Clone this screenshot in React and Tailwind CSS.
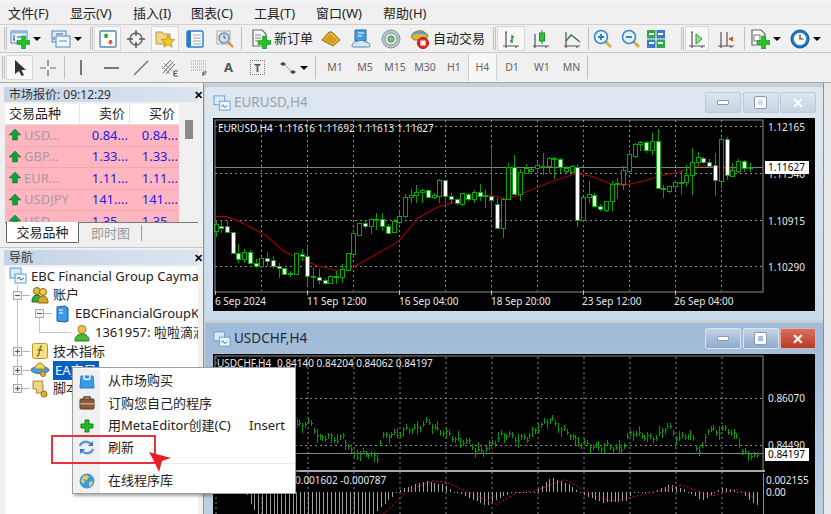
import React from "react";

// candle data read off the chart: [x, wickTop, bodyTop, bodyBottom, wickBottom, whiteBody]
const left = [
  [32,405,415,437,452,0],[49,405,420,428,440,1],[66,405,422,440,440,1],[83,438,440,502,505,1],[100,475,502,520,530,1],
  [117,490,498,520,532,0],[134,492,498,532,535,1],[152,520,532,540,545,1],[169,515,518,540,545,0],[186,498,518,525,540,1],
  [204,510,523,542,550,1],[221,530,540,548,575,1],[238,545,548,565,568,1],[255,555,561,565,572,1],[273,500,503,565,568,0],
  [290,490,505,510,525,1],[307,487,510,570,600,1],[324,545,570,575,605,1],[342,548,573,582,595,1],[359,575,583,592,597,1],
  [376,568,570,593,595,0],[393,555,570,572,595,0],[411,535,550,575,590,0],[428,500,503,552,555,0],[445,435,442,505,515,0],
  [462,410,412,447,450,0],[480,405,412,420,430,1],[497,395,400,420,445,0],[514,380,400,402,432,0],[531,380,400,420,435,1],
  [548,415,420,442,445,1],[566,400,405,438,442,0],[583,375,390,410,415,0],[600,325,333,392,395,0],[617,310,328,334,350,0],
  [634,298,318,328,350,0],[651,310,312,318,350,0],[669,312,312,334,335,1],[686,320,328,334,340,0],[703,280,283,330,350,0],
  [720,282,284,330,350,1],[738,320,330,340,355,1],[755,335,340,352,360,1],[772,320,323,355,360,0],[789,320,325,340,345,1],
  [806,312,320,340,350,0],[824,295,320,332,345,1],[841,310,328,331,365,0],[858,182,330,343,390,1],[876,335,355,428,430,1],
  [893,335,340,428,455,0],[910,230,243,340,342,0],[927,208,243,325,328,1],[945,250,260,325,345,0],
];
const right = [
  [17,235,248,262,265,0],[34,247,250,255,258,0],[51,225,238,248,262,0],[69,200,240,242,268,0],[86,212,217,240,262,0],
  [103,212,216,219,278,1],[120,215,219,243,260,1],[137,240,248,255,262,0],[155,238,241,258,262,0],[172,235,243,402,422,1],
  [189,332,334,402,405,0],[206,285,326,334,350,0],[223,322,327,360,365,1],[240,355,362,370,375,1],[258,345,347,372,378,0],
  [275,285,294,347,375,0],[292,275,292,296,338,0],[309,240,254,295,312,0],[327,195,205,255,262,0],[344,172,176,212,215,0],
  [361,165,170,175,195,0],[378,165,170,193,200,1],[395,140,165,193,208,0],[413,128,166,308,310,1],[430,298,307,310,337,0],
  [447,300,302,315,320,0],[464,282,290,302,312,0],[482,255,288,290,327,0],[499,238,268,290,300,0],[516,185,228,268,327,0],
  [533,197,213,230,240,0],[550,212,216,230,235,1],[568,218,228,240,245,1],[585,200,238,284,330,1],[603,155,160,285,305,0],
  [620,152,160,268,282,1],[637,232,252,270,272,0],[654,220,226,256,260,0],[671,222,226,246,258,1],[689,230,243,245,258,0],
];
const candles = [
  ...left.map(([x, a, b, c, d, w]) => [205 + x / 3, 85 + a / 3, 85 + b / 3, 85 + c / 3, 85 + d / 3, w]),
  ...right.map(([x, a, b, c, d, w]) => [520 + x / 3, 85 + a / 3, 85 + b / 3, 85 + c / 3, 85 + d / 3, w]),
];
const maLine = [
  ...[[32,392],[65,392],[100,405],[140,425],[185,450],[235,495],[290,520],[340,540],[400,555],[430,552],[500,512],[580,467],[640,395],[700,362],[760,345],[820,328],[870,330],[900,338],[945,328]].map(([x, y]) => [205 + x / 3, 85 + y / 3]),
  ...[[0,325],[100,285],[170,262],[220,272],[270,293],[310,298],[370,285],[420,270],[470,260],[530,240],[570,240],[620,250],[690,245]].map(([x, y]) => [520 + x / 3, 85 + y / 3]),
];

const z2 = ([x, y]) => [295 + x / 2.925, 320 + y / 3];
const pricePath = [[-235,300],[-150,310],[-60,320],[10,310],[50,310],[70,352],[140,350],[165,395],[240,405],[250,352],[300,335],[340,325],[390,305],[440,340],[500,365],[550,395],[600,342],[680,355],[700,325],[750,295],[790,335],[850,375],[900,378],[960,380],[985,330],[1040,355],[1090,318],[1120,350],[1160,345],[1185,395],[1205,330],[1250,325],[1295,345],[1310,400],[1350,405]].map(z2);
const histPath = [[-235,495],[-150,495],[-135,540],[-100,600],[200,600],[240,570],[300,512],[310,505],[380,480],[430,490],[470,512],[560,555],[600,530],[640,512],[700,512],[750,470],[800,490],[850,525],[900,545],[970,540],[990,512],[1050,510],[1100,490],[1140,505],[1190,540],[1250,500],[1300,510],[1345,553]].map(z2);
const signalPath = [[-100,640],[260,578],[330,510],[400,480],[440,482],[500,510],[590,550],[650,515],[700,510],[790,475],[850,510],[920,540],[1000,525],[1130,492],[1220,525],[1290,505],[1345,530]].map(z2);

function valueAt(pts, x) {
  for (let i = 1; i < pts.length; i++) {
    if (x <= pts[i][0]) {
      const t = (x - pts[i - 1][0]) / (pts[i][0] - pts[i - 1][0]);
      return pts[i - 1][1] + (pts[i][1] - pts[i - 1][1]) * t;
    }
  }
  return pts[pts.length - 1][1];
}

const toPoints = (pts) => pts.map((p) => p.join(",")).join(" ");
const range = (from, to, step) => {
  const out = [];
  for (let v = from; v <= to; v += step) out.push(v);
  return out;
};

function EurChart() {
  return (
    <svg width="602" height="193" viewBox="213 117 602 193" className="block bg-black">
      {[261, 307, 353, 399, 445, 491, 537, 583, 629, 675, 721].map((x) => (
        <line key={x} x1={x + 0.5} x2={x + 0.5} y1="119" y2="290" stroke="#8c8c8c" strokeDasharray="2 3" />
      ))}
      {[125.5, 172.5, 219.5, 265.5].map((y) => (
        <line key={y} x1="215" x2="763" y1={y} y2={y} stroke="#8c8c8c" strokeDasharray="2 3" />
      ))}
      <line x1="215" x2="763" y1="166.5" y2="166.5" stroke="#808080" />
      <polyline points={toPoints(maLine)} fill="none" stroke="#a80000" strokeWidth="1.1" />
      {candles.map(([x, a, b, c, d, w], i) => {
        const cx = Math.round(x) + 0.5;
        return (
          <g key={i} shapeRendering="crispEdges">
            <line x1={cx} x2={cx} y1={a} y2={d} stroke="#00a000" />
            <rect x={cx - 2} y={b} width="4" height={Math.max(c - b, 1)} fill={w ? "#fff" : "#000"} stroke="#00a800" />
          </g>
        );
      })}
      <rect x="215" y="119" width="548" height="172" fill="none" stroke="#909090" />
      {[215, 307, 399, 491, 583, 675].map((x) => (
        <line key={x} x1={x + 0.5} x2={x + 0.5} y1="290" y2="294" stroke="#c0c0c0" />
      ))}
      <g fill="#e8e8e8" fontSize="10">
        <text x="218" y="131">EURUSD,H4</text>
        <text x="278" y="131">1.11616 1.11692 1.11613 1.11627</text>
        <text x="768" y="130">1.12165</text>
        <text x="768" y="177">1.11340</text>
        <text x="768" y="224">1.10915</text>
        <text x="768" y="270">1.10290</text>
        <text x="215" y="304">6 Sep 2024</text>
        <text x="307" y="304">11 Sep 12:00</text>
        <text x="399" y="304">16 Sep 04:00</text>
        <text x="491" y="304">18 Sep 20:00</text>
        <text x="582" y="304">23 Sep 12:00</text>
        <text x="674" y="304">26 Sep 04:00</text>
      </g>
      <rect x="765" y="160" width="44" height="13" fill="#fff" />
      <text x="768" y="170" fill="#000" fontSize="10">1.11627</text>
    </svg>
  );
}

function ChfChart() {
  const step = 46 / 12;
  const bars = range(216, 757, step);
  const priceBars = range(216, 757, 46 / 16);
  return (
    <svg width="602" height="161" viewBox="213 353 602 161" className="block bg-black">
      {range(215.5, 730, 46).map((x) => (
        <line key={x} x1={x + 0.5} x2={x + 0.5} y1="356" y2="514" stroke="#8c8c8c" strokeDasharray="2 3" />
      ))}
      {[397.5, 444.5].map((y) => (
        <line key={y} x1="215" x2="763" y1={y} y2={y} stroke="#8c8c8c" strokeDasharray="2 3" />
      ))}
      <line x1="215" x2="763" y1="452.5" y2="452.5" stroke="#7f8790" />
      {priceBars.map((x, i) => {
        const y = valueAt(pricePath, x);
        const noise = Math.sin(i * 1.7) * 2.5 + Math.cos(i * 0.9) * 1.5;
        const cx = Math.round(x) + 0.5;
        return (
          <g key={i} shapeRendering="crispEdges">
            <line x1={cx} x2={cx} y1={y + noise - 3 - (i % 7 === 0 ? 4 : 0)} y2={y + noise + 3 + (i % 5 === 0 ? 4 : 0)} stroke="#009a00" />
            <line x1={cx - 1} x2={cx + 1} y1={y + noise} y2={y + noise} stroke="#009a00" />
          </g>
        );
      })}
      <rect x="215" y="355" width="548" height="115" fill="none" stroke="#909090" />
      <rect x="213" y="469" width="552" height="2" fill="#a8a8a8" />
      {bars.map((x, i) => {
        const y = valueAt(histPath, x);
        const cx = Math.round(x) + 0.5;
        return <line key={i} x1={cx} x2={cx} y1="490.5" y2={Math.abs(y - 490.5) < 1 ? 492 : y} stroke="#a0a0a0" shapeRendering="crispEdges" />;
      })}
      <polyline points={toPoints(signalPath)} fill="none" stroke="#d01010" strokeDasharray="2 2" />
      <line x1="763.5" x2="763.5" y1="472" y2="514" stroke="#909090" />
      <g fill="#e8e8e8" fontSize="10">
        <text x="217" y="366">USDCHF,H4</text>
        <text x="277" y="366">0.84140 0.84204 0.84062 0.84197</text>
        <text x="295" y="483">0.001602 -0.000787</text>
        <text x="768" y="401">0.86070</text>
        <text x="768" y="448">0.84490</text>
        <text x="766" y="483">0.002155</text>
        <text x="766" y="495">0.00</text>
      </g>
      <rect x="765" y="447" width="44" height="13" fill="#fff" />
      <text x="768" y="457" fill="#000" fontSize="10">0.84197</text>
    </svg>
  );
}

/* toolbar icons */
const Svg = ({ children, size = 20 }) => (
  <svg width={size} height={size} viewBox="0 0 20 20" className="block shrink-0">
    {children}
  </svg>
);
const Plus = ({ x = 9, y = 9, s = 10 }) => (
  <path
    d={`M${x + s * 0.35} ${y}h${s * 0.3}v${s * 0.35}h${s * 0.35}v${s * 0.3}h${-s * 0.35}v${s * 0.35}h${-s * 0.3}v${-s * 0.35}h${-s * 0.35}v${-s * 0.3}h${s * 0.35}z`}
    fill="#22c42a"
    stroke="#0c8c14"
    strokeWidth="0.6"
  />
);
const IconNewChart = () => (
  <Svg>
    <rect x="1" y="2" width="16" height="12" fill="#eaf3fb" stroke="#4a8ac8" />
    <rect x="1" y="2" width="16" height="2.500" fill="#8ab8e0" />
    <path d="M4 6v5M3 11h2M7 8h4" stroke="#335" fill="none" strokeWidth="0.9" />
    <Plus x={7} y={7} s={13} />
  </Svg>
);
const IconProfile = () => (
  <Svg>
    <rect x="1" y="2" width="14" height="11" fill="#dcebf8" stroke="#4a8ac8" />
    <rect x="5" y="7" width="14" height="11" fill="#f0f6fc" stroke="#4a8ac8" />
    <path d="M3 8v3M5 5h7" stroke="#456" fill="none" strokeWidth="0.9" />
    <path d="M8 12h8" stroke="#6a8aa8" fill="none" />
  </Svg>
);
const IconMarket = () => (
  <Svg>
    <rect x="2" y="2" width="16" height="16" rx="1" fill="#fff" stroke="#4a8ac8" strokeWidth="1.4" />
    <path d="M8 4l3 3H9.500v2h-3V7H5z" fill="#2aa83a" />
    <path d="M12.500 16l-3-3h1.500v-2h3v2H15z" fill="#e8602a" />
  </Svg>
);
const IconCross = () => (
  <Svg>
    <circle cx="10" cy="10" r="6" fill="none" stroke="#666" strokeWidth="1.5" />
    <path d="M10 1v6M10 13v6M1 10h6M13 10h6" stroke="#555" strokeWidth="1.5" />
  </Svg>
);
const IconFav = () => (
  <Svg>
    <path d="M1 3h6l2 2h6v10H1z" fill="#f0d68a" stroke="#b89a4a" />
    <path d="M13 6l2 4.200 4.600.500-3.400 3 1 4.500-4.200-2.400-4.200 2.400 1-4.500-3.400-3 4.600-.500z" fill="#f4c81e" stroke="#a88410" strokeWidth="0.7" />
  </Svg>
);
const IconBook = () => (
  <Svg>
    <rect x="2" y="2" width="16" height="16" rx="1.500" fill="#fff" stroke="#2a7ac8" strokeWidth="1.4" />
    <rect x="2" y="2" width="4" height="16" fill="#2a7ac8" />
    <path d="M8 6h8M8 9h8M8 12h8M8 15h8" stroke="#8aa" />
  </Svg>
);
const IconTester = () => (
  <Svg>
    <rect x="2" y="2" width="13" height="13" fill="#eee" stroke="#aaa" />
    <circle cx="9" cy="9" r="5" fill="#cfe3f5" stroke="#6a8aa8" strokeWidth="1.300" />
    <path d="M9 6v3h2" stroke="#456" fill="none" />
    <path d="M13 13l5 5" stroke="#c8982a" strokeWidth="2.200" />
  </Svg>
);
const IconNewOrder = () => (
  <Svg>
    <path d="M2 1h9l4 4v12H2z" fill="#fff" stroke="#666" strokeWidth="1.200" />
    <path d="M4 6h6M4 9h6M4 12h3" stroke="#777" />
    <Plus x={7} y={7} s={13} />
  </Svg>
);
const IconTag = () => (
  <Svg>
    <path d="M1 11l7-8h3l8 8-7 6z" fill="#e8b830" stroke="#8a6414" />
    <path d="M3 11l6-6 7 6-4 4z" fill="#d89c20" />
  </Svg>
);
const IconSignals = () => (
  <Svg>
    <path d="M4 1h11v11H4z" fill="#4a9ae0" stroke="#2a6ab0" />
    <path d="M7 4h6M7 7h4" stroke="#fff" />
    <path d="M1 17c0-3 3-5 5-4 1-2 7-2 8 0 3 0 5 1 5 4 0 1-1 1-2 1H3c-1 0-2 0-2-1z" fill="#d8e8f5" stroke="#5a8ab8" />
  </Svg>
);
const IconRadar = () => (
  <Svg>
    <circle cx="10" cy="10" r="9" fill="#b8c4c8" stroke="#8a9aa0" />
    <circle cx="10" cy="10" r="6" fill="#dfe6e8" stroke="#8a9aa0" />
    <circle cx="10" cy="10" r="3" fill="#7ac08a" stroke="#4a8a5a" />
  </Svg>
);
const IconAuto = () => (
  <Svg>
    <path d="M1 8c1-5 7-7 12-6l5 4-2 5H4z" fill="#e2b23a" stroke="#98781a" />
    <path d="M3 5c4-2 9-2 13 0" stroke="#4a9ae0" strokeWidth="2.400" fill="none" />
    <circle cx="13" cy="14" r="5.500" fill="#e03020" stroke="#a01810" />
    <rect x="10.500" y="11.500" width="5" height="5" fill="#fff" />
  </Svg>
);
const IconBars = () => (
  <Svg>
    <path d="M2 17h16M5 3v14M4 3h2M15 17v2M5 17v2" stroke="#555" fill="none" strokeWidth="1.200" />
    <path d="M11 6v8M9 12h2M11 8h2" stroke="#18a028" strokeWidth="1.500" fill="none" />
  </Svg>
);
const IconCandle = () => (
  <Svg>
    <path d="M2 17h16M4 5v12M15 17v2M4 17v2" stroke="#555" fill="none" strokeWidth="1.200" />
    <path d="M11 1v14" stroke="#189028" />
    <rect x="8.500" y="4" width="5" height="8" fill="#2cc040" stroke="#189028" />
  </Svg>
);
const IconLine = () => (
  <Svg>
    <path d="M2 17h16M4 3v14M15 17v2M4 17v2" stroke="#555" fill="none" strokeWidth="1.200" />
    <path d="M4 12l5-6 4 3 5 4" stroke="#2a7a3a" fill="none" strokeWidth="1.300" />
  </Svg>
);
const IconZoom = ({ minus }) => (
  <Svg>
    <path d="M12 12l6 6" stroke="#d8b040" strokeWidth="3" />
    <circle cx="8" cy="8" r="6.500" fill="#e4f2fc" stroke="#3a8ac8" strokeWidth="1.600" />
    <path d={minus ? "M5 8h6" : "M5 8h6M8 5v6"} stroke="#2a7ab8" strokeWidth="1.800" />
  </Svg>
);
const IconTile = () => (
  <Svg>
    <rect x="1" y="1" width="8.500" height="8.500" fill="#2ea84a" />
    <rect x="10.500" y="1" width="8.500" height="8.500" fill="#3a7ad0" />
    <rect x="1" y="10.500" width="8.500" height="8.500" fill="#3a7ad0" />
    <rect x="10.500" y="10.500" width="8.500" height="8.500" fill="#2ea84a" />
    <path d="M3 5h5M12 5h5M3 14h5M12 14h5" stroke="#fff" strokeWidth="2" />
  </Svg>
);
const IconShift = () => (
  <Svg>
    <path d="M2 17h16M5 3v14M4 3h2M15 17v2M5 17v2" stroke="#555" fill="none" strokeWidth="1.200" />
    <path d="M9 5l6 5-6 5z" fill="#9ce29c" stroke="#18a028" />
  </Svg>
);
const IconAutoScroll = () => (
  <Svg>
    <path d="M2 17h16M5 3v14M11 3v14M15 17v2M5 17v2" stroke="#555" fill="none" strokeWidth="1.200" />
    <path d="M13 10l4-2-1 2 1 2z" fill="#e04020" stroke="#e04020" />
  </Svg>
);
const IconTemplate = () => (
  <Svg>
    <path d="M2 1h9l4 4v11H2z" fill="#fff" stroke="#666" strokeWidth="1.200" />
    <rect x="4" y="6" width="6" height="6" fill="none" stroke="#777" />
    <Plus x={7} y={7} s={13} />
  </Svg>
);
const IconClock = () => (
  <Svg>
    <circle cx="10" cy="10" r="9" fill="#1e78c8" stroke="#14508c" />
    <circle cx="10" cy="10" r="6.200" fill="#fff" />
    <path d="M10 5.500V10h3.500" stroke="#333" fill="none" strokeWidth="1.200" />
  </Svg>
);

const Grip = () => <div className="w-[3px] h-[23px] mx-[1px] shrink-0 border-x border-[#c4c4c4] bg-[#e6e6e6]" />;
const Sep = () => <div className="w-px h-[23px] mx-[1px] shrink-0 bg-[#c0c0c0]" />;
const Caret = () => <div className="w-0 h-0 shrink-0 border-x-[4px] border-x-transparent border-t-[4px] border-t-black" />;

function Tool({ w = 30, pressed, children }) {
  return (
    <div
      className={`h-[25px] shrink-0 flex items-center justify-center gap-[3px] ${
        pressed ? "bg-[#f8f8f8] border border-[#d8d8d8]" : ""
      }`}
      style={{ width: w }}
    >
      {children}
    </div>
  );
}

function TopToolbar() {
  return (
    <div className="h-[28px] flex items-center pl-[3px] border-b border-[#c8c8c8]">
      <Grip />
      <Tool w={35}><IconNewChart /><Caret /></Tool>
      <Tool w={46}><IconProfile /><Caret /></Tool>
      <Grip />
      <Tool w={27} pressed><IconMarket /></Tool>
      <Tool w={30}><IconCross /></Tool>
      <Tool w={28} pressed><IconFav /></Tool>
      <Tool w={31}><IconBook /></Tool>
      <Tool w={30}><IconTester /></Tool>
      <Sep />
      <div className="w-[65px] h-[25px] ml-[8px] shrink-0 flex items-center gap-[3px]">
        <IconNewOrder />
        <span className="text-[13px] text-[#222]">新订单</span>
      </div>
      <Tool w={30}><IconTag /></Tool>
      <Tool w={30}><IconSignals /></Tool>
      <Tool w={30}><IconRadar /></Tool>
      <div className="w-[86px] h-[25px] shrink-0 flex items-center gap-[3px] pl-[4px]">
        <IconAuto />
        <span className="text-[13px] text-[#222]">自动交易</span>
      </div>
      <Grip />
      <Tool w={28} pressed><IconBars /></Tool>
      <Tool w={32}><IconCandle /></Tool>
      <Tool w={30}><IconLine /></Tool>
      <Sep />
      <Tool w={26}><IconZoom /></Tool>
      <Tool w={30}><IconZoom minus /></Tool>
      <Tool w={20}><IconTile /></Tool>
      <div className="w-[14px] shrink-0" />
      <Grip />
      <Tool w={24} pressed><IconShift /></Tool>
      <Tool w={34}><IconAutoScroll /></Tool>
      <Sep />
      <Tool w={38}><IconTemplate /><Caret /></Tool>
      <Tool w={42}><IconClock /><Caret /></Tool>
    </div>
  );
}

function DrawToolbar() {
  const frames = [
    ["M1", 30],
    ["M5", 30],
    ["M15", 30],
    ["M30", 30],
    ["H1", 28],
    ["H4", 29],
    ["D1", 30],
    ["W1", 30],
    ["MN", 29],
  ];
  return (
    <div className="h-[29px] flex items-center pl-[1px] bg-[#f0f0f0]">
      <Grip />
      <Tool w={27} pressed>
        <svg width="14" height="18" viewBox="0 0 14 18"><path d="M2 1v14l4-3 2.500 5 2.500-1-2.500-5H13z" fill="#333" /></svg>
      </Tool>
      <Tool w={30}>
        <svg width="18" height="18" viewBox="0 0 18 18"><path d="M9 1v6M9 11v6M1 9h6M11 9h6" stroke="#666" strokeWidth="1.200" /></svg>
      </Tool>
      <Sep />
      <Tool w={30}><div className="w-[2px] h-[15px] bg-[#777]" /></Tool>
      <Tool w={30}><div className="w-[15px] h-[2px] bg-[#777]" /></Tool>
      <Tool w={29}>
        <svg width="16" height="16" viewBox="0 0 16 16"><path d="M1 15L15 1" stroke="#777" strokeWidth="1.400" /></svg>
      </Tool>
      <Tool w={29}>
        <svg width="18" height="18" viewBox="0 0 18 18">
          <path d="M1 10L10 1M2 14L12 3M5 15L14 5" stroke="#666" />
          <path d="M3 4l8 8M1 7l8 8" stroke="#999" />
          <path d="M13 12h4M13 14.500h3M13 17h4M13 12v5" stroke="#555" strokeWidth="1.200" />
        </svg>
      </Tool>
      <Tool w={30}>
        <svg width="18" height="18" viewBox="0 0 18 18">
          <path d="M1 2h15M1 5h15M1 8h15M1 11h15" stroke="#999" strokeDasharray="1 1" />
          <path d="M13 13h4M13 15h3M13 13v4" stroke="#555" strokeWidth="1.200" />
        </svg>
      </Tool>
      <Tool w={29}><span className="text-[13px] font-bold text-[#555] leading-none">A</span></Tool>
      <Tool w={29}>
        <div className="w-[15px] h-[15px] border border-dotted border-[#777] flex items-center justify-center text-[11px] font-bold text-[#555] leading-none">T</div>
      </Tool>
      <Tool w={42}>
        <svg width="18" height="14" viewBox="0 0 18 14">
          <path d="M1 3l3-2 3 2-3 2zM11 11l3-2 3 2-3 2z" fill="#444" />
          <path d="M6 4l6 6" stroke="#666" strokeDasharray="1.500 1" />
        </svg>
        <Caret />
      </Tool>
      <Sep />
      <div className="w-[3px] shrink-0" />
      {frames.map(([f, w]) => (
        <div
          key={f}
          className={`h-[27px] shrink-0 flex items-center justify-center text-[10.5px] text-[#666] ${
            f === "H4" ? "bg-[#f8f8f8] border-x border-[#cfcfcf]" : ""
          }`}
          style={{ width: w }}
        >
          {f}
        </div>
      ))}
      <Sep />
    </div>
  );
}

function PanelHeader({ title }) {
  return (
    <div className="h-[15px] mx-[4px] flex items-center justify-between bg-gradient-to-r from-[#c4d4e6] to-[#dbe5f0] text-[12px] leading-none text-[#333] pl-[5px]">
      <span>{title}</span>
      <span className="w-[14px] text-[11px] font-bold text-black translate-x-[9px]">✕</span>
    </div>
  );
}

function MarketWatch() {
  const rows = [
    ["USD...", "0.84...", "0.84..."],
    ["GBP...", "1.33...", "1.33..."],
    ["EUR...", "1.11...", "1.11..."],
    ["USDJPY", "141....", "141...."],
    ["USD...", "1.35...", "1.35..."],
  ];
  return (
    <div className="h-[165px] pt-[4px] border-b border-[#c8c8c8]">
      <PanelHeader title="市场报价: 09:12:29" />
      <div className="mt-[2px] mx-[5px] h-[118px] overflow-hidden flex bg-[#f0f0f0]">
        <div className="w-[174px] shrink-0">
          <div className="h-[21px] grid grid-cols-[74px_50px_50px] bg-white text-[13px] text-[#222] items-center border-b border-[#e0e0e0]">
            <span className="pl-[4px]">交易品种</span>
            <span className="text-right pr-[4px] border-l border-[#e4e4e4]">卖价</span>
            <span className="text-right pr-[4px] border-l border-[#e4e4e4]">买价</span>
          </div>
          {rows.map((r, i) => (
            <div key={i} className="h-[21.5px] grid grid-cols-[74px_50px_50px] bg-[#ffb6c1] items-center border-b border-[#f0a8b4] text-[13px] leading-none">
              <span className="flex items-center gap-[3px] pl-[4px] text-[#a89aa0]">
                <svg width="12" height="12" viewBox="0 0 12 12" className="shrink-0"><path d="M6 0l6 6H8.500v5h-5V6H0z" fill="#12a03a" stroke="#0a6a24" strokeWidth="0.5" /></svg>
                {r[0]}
              </span>
              <span className="text-right pr-[1px] text-[#2020e8]">{r[1]}</span>
              <span className="text-right pr-[1px] text-[#2020e8]">{r[2]}</span>
            </div>
          ))}
        </div>
        <div className="flex-1 pl-[6px] pt-[16px]">
          <div className="w-[8px] h-[19px] bg-[#8a8a8a]" />
        </div>
      </div>
      <div className="mx-[5px] h-[21px] flex items-center border-t border-[#777] relative">
        <div className="ml-[1px] w-[73px] h-[21px] -mt-px bg-white border-x border-b border-[#666] rounded-b-[2px] text-[13px] text-[#222] text-center leading-[20px]">交易品种</div>
        <div className="ml-[12px] w-[50px] text-[13px] text-[#999] leading-[20px]">即时图</div>
        <div className="w-px h-[16px] bg-[#999]" />
      </div>
    </div>
  );
}

function TreeBox({ open }) {
  return (
    <div className="w-[9px] h-[9px] shrink-0 border border-[#a8a8a8] bg-[#f4f4f4] flex items-center justify-center relative">
      <div className="w-[5px] h-px bg-[#557]" />
      {!open && <div className="absolute w-px h-[5px] bg-[#557]" />}
    </div>
  );
}

function TreeRow({ indent = 0, box, open, icon, children, selected }) {
  return (
    <div className="h-[18.750px] flex items-center whitespace-nowrap" style={{ paddingLeft: indent }}>
      {box ? <TreeBox open={open} /> : null}
      {box ? <div className="w-[8px] h-px bg-[#b4b4b4] shrink-0" /> : null}
      <div className="w-[20px] shrink-0 flex justify-center">{icon}</div>
      <span
        className={`ml-[3px] text-[13px] ${selected ? "bg-[#0a5fc4] text-white w-[46px] h-[19px] leading-[19px] px-[2px] -ml-[1px]" : "text-[#222]"}`}
      >
        {children}
      </span>
    </div>
  );
}

const NavIcons = {
  root: (
    <svg width="18" height="18" viewBox="0 0 18 18">
      <rect x="1" y="1" width="11" height="10" fill="#dcebf8" stroke="#5a9ad8" />
      <rect x="6" y="7" width="11" height="9" fill="#eef6fc" stroke="#5a9ad8" />
      <path d="M8 12l2-2 2 3 3-2" stroke="#468" fill="none" />
    </svg>
  ),
  accounts: (
    <svg width="18" height="18" viewBox="0 0 18 18">
      <circle cx="6" cy="5" r="3.500" fill="#e8b83a" stroke="#8a6a14" />
      <path d="M1 16c0-5 2-7 5-7s5 2 5 7z" fill="#3aa83a" stroke="#1a6a1a" />
      <circle cx="12" cy="6" r="3.500" fill="#f0c84a" stroke="#8a6a14" />
      <path d="M7 17c0-5 2-7 5-7s5 2 5 7z" fill="#d8a82a" stroke="#8a6a14" />
    </svg>
  ),
  server: (
    <svg width="14" height="18" viewBox="0 0 14 18">
      <path d="M2 2l8-1 3 2v13l-3 1-8-1z" fill="#3a9ae8" stroke="#1a5a98" />
      <path d="M4 5h4M4 8h4" stroke="#fff" />
    </svg>
  ),
  user: (
    <svg width="16" height="18" viewBox="0 0 16 18">
      <circle cx="8" cy="5.500" r="4" fill="#f0c04a" stroke="#9a7a1a" />
      <path d="M1 17c0-5 3-7 7-7s7 2 7 7z" fill="#4ab83a" stroke="#2a7a1a" />
    </svg>
  ),
  indicator: (
    <svg width="16" height="16" viewBox="0 0 16 16">
      <rect x="0.500" y="0.500" width="15" height="15" rx="2" fill="#f4e08a" stroke="#b8982a" />
      <path d="M10 3c-2 0-2 2-2.500 5S7 13 5 13M5.500 7h5" stroke="#8a6a10" fill="none" strokeWidth="1.300" />
    </svg>
  ),
  ea: (
    <svg width="20" height="16" viewBox="0 0 20 16">
      <ellipse cx="10" cy="8" rx="9" ry="3.500" fill="#4a9ae0" stroke="#2a6ab0" />
      <path d="M5 7c0-4 3-6 5-6s5 2 5 6z" fill="#f0d060" stroke="#a08a20" />
      <circle cx="13" cy="12" r="2.500" fill="#e8b030" stroke="#987010" />
    </svg>
  ),
  script: (
    <svg width="18" height="18" viewBox="0 0 18 18">
      <path d="M2 1h10c-1 1-1 2 0 3v9H5c1-1 1-3 0-4H2z" fill="#ecd48a" stroke="#a88a3a" />
      <circle cx="13" cy="14" r="3" fill="#e8b030" stroke="#987010" />
    </svg>
  ),
};

function Navigator() {
  return (
    <div className="flex-1 min-h-0 pt-[2px] flex flex-col">
      <PanelHeader title="导航" />
      <div className="mt-[2px] mx-[5px] flex-1 min-h-0 bg-white overflow-hidden relative">
        <div className="absolute left-[12px] top-[18px] w-px h-[102px] bg-[#c4c4c4]" />
        <div className="absolute left-[34px] top-[50px] w-px h-[16px] bg-[#c4c4c4]" />
        <div className="absolute left-[34px] top-[65px] w-[32px] h-px bg-[#c4c4c4]" />
        <div className="relative">
          <TreeRow indent={3} icon={NavIcons.root}>EBC Financial Group Cayman Islands</TreeRow>
          <TreeRow indent={8} box open icon={NavIcons.accounts}>账户</TreeRow>
          <TreeRow indent={30} box open icon={NavIcons.server}>EBCFinancialGroupKY-Demo</TreeRow>
          <TreeRow indent={67} icon={NavIcons.user}>1361957: 啦啦滴滴答答</TreeRow>
          <TreeRow indent={8} box icon={NavIcons.indicator}>技术指标</TreeRow>
          <TreeRow indent={8} box icon={NavIcons.ea} selected>EA交易</TreeRow>
          <TreeRow indent={8} box icon={NavIcons.script}>脚本</TreeRow>
        </div>
      </div>
    </div>
  );
}

function WinButton({ kind, active }) {
  const red = kind === "close" && active;
  return (
    <div
      className={`w-[36px] h-[21px] flex items-center justify-center rounded-[2px] border ${
        red
          ? "bg-gradient-to-b from-[#d8705c] to-[#b83a28] border-[#e4b0a4]"
          : active
            ? "bg-gradient-to-b from-[#c4d4e6] to-[#8eaacb] border-[#d8e4f0]"
            : "bg-gradient-to-b from-[#dce6ef] to-[#c6d4e2] border-[#bccada]"
      }`}
    >
      {kind === "min" && <div className="w-[12px] h-[5px] bg-white border border-[#8a9ab0] rounded-[1px]" />}
      {kind === "max" && <div className="w-[11px] h-[11px] border-[3px] border-white outline outline-1 outline-[#8a9ab0] rounded-[1px]" />}
      {kind === "close" && <span className="text-[14px] font-bold leading-none text-white">✕</span>}
    </div>
  );
}

function ChartWindow({ title, active, height, children }) {
  return (
    <div
      className={`w-[618px] shrink-0 px-[8px] rounded-t-[3px] border-t border-[#c0c8d0] ${
        active ? "bg-gradient-to-b from-[#a0bbd8] to-[#bcd0e4]" : "bg-gradient-to-b from-[#dfe8f0] to-[#c8dcec]"
      }`}
      style={{ height }}
    >
      <div className="h-[31px] flex items-center gap-[3px] -mr-px">
        <svg width="18" height="16" viewBox="0 0 20 18" className="shrink-0">
          <rect x="1" y="1" width="12" height="10" fill="#dcebf8" stroke="#5a9ad8" />
          <rect x="7" y="7" width="12" height="10" fill="#eef6fc" stroke="#5a9ad8" />
          <path d="M9 13l2-2 2 3 3-2" stroke="#468" fill="none" />
        </svg>
        <span className={`text-[13.5px] flex-1 ${active ? "text-[#1e2a36]" : "text-[#9aa4ac]"}`}>{title}</span>
        <div className="flex gap-[1.5px]">
          <WinButton kind="min" active={active} />
          <WinButton kind="max" active={active} />
          <WinButton kind="close" active={active} />
        </div>
      </div>
      {children}
    </div>
  );
}

function ContextMenu() {
  const Row = ({ icon, label, right, h = 23 }) => (
    <div className="flex items-center" style={{ height: h }}>
      <div className="w-[27px] h-full shrink-0 bg-[#f0f0f0] flex items-center justify-center">{icon}</div>
      <span className="ml-[8px] text-[13px] text-[#222] whitespace-nowrap w-[141px]">{label}</span>
      {right && <span className="text-[13px] text-[#222]">{right}</span>}
    </div>
  );
  return (
    <div className="absolute left-[72px] top-[367px] w-[224px] h-[127px] bg-white border border-[#a0a0a0] shadow-[2px_2px_3px_rgba(0,0,0,0.35)] pt-[1px] flex flex-col">
      <Row
        h={24}
        label="从市场购买"
        icon={
          <svg width="16" height="16" viewBox="0 0 16 16">
            <path d="M2 3h12l1 12H1z" fill="#3a9ae8" stroke="#2a7ac0" />
            <path d="M5 2v3c0 2 6 2 6 0V2" stroke="#fff" fill="none" strokeWidth="1.400" />
          </svg>
        }
      />
      <Row
        label="订购您自己的程序"
        icon={
          <svg width="16" height="16" viewBox="0 0 16 16">
            <rect x="1" y="4" width="14" height="10" rx="1" fill="#8a5a3a" stroke="#5a3a20" />
            <path d="M5 4V2h6v2" stroke="#5a3a20" fill="none" strokeWidth="1.300" />
            <rect x="1" y="8" width="14" height="1.500" fill="#c8a080" />
          </svg>
        }
      />
      <Row
        label="用MetaEditor创建(C)"
        right="Insert"
        icon={
          <svg width="14" height="14" viewBox="0 0 14 14">
            <path d="M5 1h4v4h4v4H9v4H5V9H1V5h4z" fill="#22b82a" stroke="#0c8a14" />
          </svg>
        }
      />
      <Row
        label="刷新"
        icon={
          <svg width="17" height="17" viewBox="0 0 17 17" fill="none">
            <path d="M2 7c1-4 7-6 11-2" stroke="#5a9ad8" strokeWidth="2.400" />
            <path d="M15 10c-1 4-7 6-11 2" stroke="#5a9ad8" strokeWidth="2.400" />
            <path d="M15 2v5h-5z" fill="#3a7ab8" />
            <path d="M2 15v-5h5z" fill="#3a7ab8" />
          </svg>
        }
      />
      <div className="h-[10px] flex">
        <div className="w-[27px] shrink-0 bg-[#f0f0f0]" />
        <div className="flex-1 ml-[1px] mt-[4px] h-px bg-[#eaeaea]" />
      </div>
      <Row
        h={25}
        label="在线程序库"
        icon={
          <svg width="16" height="16" viewBox="0 0 16 16">
            <circle cx="8" cy="8" r="7.500" fill="#3a9ae8" />
            <path d="M4 3c2-1 5-1 6 1l-2 3-3-1 1 3-2 2-2-3zM10 9l3-1 1 2-3 4-1-2z" fill="#e8d040" />
          </svg>
        }
      />
    </div>
  );
}

export default function App() {
  const menus = [
    ["文件(F)", 62],
    ["显示(V)", 63],
    ["插入(I)", 58],
    ["图表(C)", 63],
    ["工具(T)", 62],
    ["窗口(W)", 67],
    ["帮助(H)", 60],
  ];
  return (
    <div className="w-[831px] h-[514px] relative overflow-hidden bg-[#f0f0f0] font-['Noto_Sans','Noto_Sans_CJK_SC',sans-serif]">
      <div className="h-[25px] pl-[8px] flex items-center pt-[3px] border-b border-[#cfcfcf] bg-gradient-to-b from-[#f3f5fa] to-[#f0f0f0] to-[20%]">
        {menus.map(([m, w]) => (
          <span key={m} className="text-[13px] text-[#222] leading-none shrink-0" style={{ width: w }}>
            {m}
          </span>
        ))}
      </div>
      <TopToolbar />
      <DrawToolbar />
      <div className="h-[432px] flex border-t border-[#a8a8a8]">
        <div className="w-[203px] shrink-0 flex flex-col">
          <MarketWatch />
          <Navigator />
        </div>
        <div className="w-[621px] shrink-0 pl-[1px] border-x border-[#909090] overflow-hidden bg-[#c8d0d8]">
          <div className="h-[3px]" />
          <ChartWindow title="EURUSD,H4" height={234}>
            <EurChart />
          </ChartWindow>
          <div className="h-[2px]" />
          <ChartWindow title="USDCHF,H4" active height={193}>
            <ChfChart />
          </ChartWindow>
        </div>
        <div className="flex-1 bg-[#e8e8e8]" />
      </div>

      <ContextMenu />
      <div className="absolute left-[51px] top-[435px] w-[105px] h-[29px] border-2 border-[#e5323c]" />
      <svg width="26" height="24" viewBox="0 0 26 24" className="absolute left-[148px] top-[451px]">
        <path d="M1 1L23 7L14 10L11 21L6 10z" fill="#ee1c25" />
      </svg>
    </div>
  );
}
